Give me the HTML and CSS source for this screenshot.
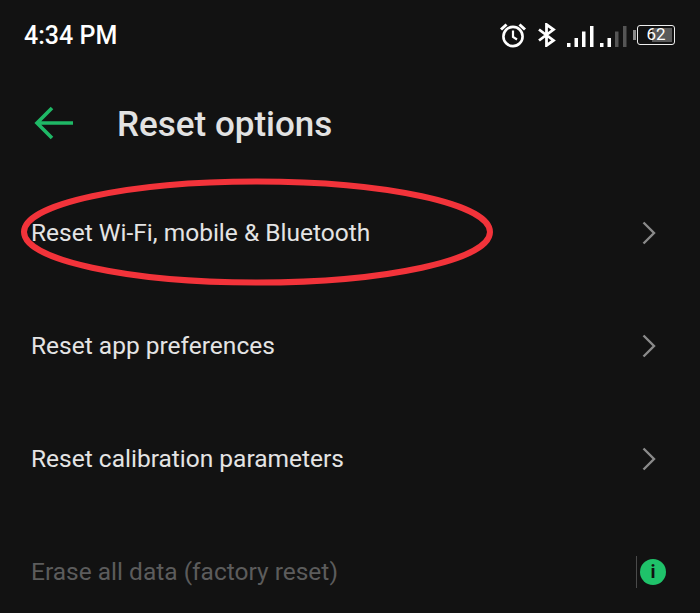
FILE: index.html
```html
<!DOCTYPE html>
<html>
<head>
  <meta charset="utf-8" />
  <meta name="viewport" content="width=device-width, initial-scale=1" />
  <title>Reset options</title>
  <link rel="stylesheet" href="styles.css">
</head>
<body>
  <div id="status-bar">
    <span id="clock">4:34 PM</span>
    <div id="status-icons">
      <svg class="alarm" width="28" height="26" viewBox="0 0 28 26" fill="none" stroke="#fff">
        <circle cx="14" cy="14.5" r="9.6" stroke-width="2.6" />
        <path d="M14 8.5V15l4 2.5" stroke-width="2.2" />
        <path d="M2 7.5 7.5 2.5M26 7.5 20.5 2.5" stroke-width="3" />
      </svg>
      <svg class="bluetooth" width="20" height="24" viewBox="0 0 20 24" fill="none" stroke="#fff" stroke-width="2.8">
        <path d="M2 6.5 16.5 17.5 9.5 22.5V1.5L16.5 6.5 2 17.5" />
      </svg>
      <svg class="signal" width="64" height="21" viewBox="0 0 64 21" fill="#fff">
        <rect x="0" y="17" width="3.5" height="4" />
        <rect x="7.5" y="12" width="3.5" height="9" />
        <rect x="15" y="5.5" width="3.5" height="15.5" />
        <rect x="23" y="0" width="3.5" height="21" />
        <rect x="33" y="17" width="3.5" height="4" />
        <rect x="40.5" y="12" width="3.5" height="9" />
        <rect x="48" y="5.5" width="3.5" height="15.5" fill="#555" />
        <rect x="56" y="0" width="3.5" height="21" fill="#555" />
      </svg>
      <div class="battery-nub"></div>
      <div class="battery">
        <div class="battery-level" style="width: 62%"></div>
        <span>62</span>
      </div>
    </div>
  </div>

  <div id="header">
    <svg class="back" width="42" height="34" viewBox="0 0 42 34" fill="none" stroke="#1fb866" stroke-width="3.6">
      <path d="M39 17H3M18 2 3 17l15 15" />
    </svg>
    <h1>Reset options</h1>
  </div>

  <div id="options">
    <div class="row">
      <span>Reset Wi-Fi, mobile &amp; Bluetooth</span>
      <svg class="chevron" width="16" height="24" viewBox="0 0 16 24" fill="none" stroke="#8a8a8a" stroke-width="2.4">
        <path d="M2.5 1.5 13 12 2.5 22.5" />
      </svg>
      <svg class="circled" width="476" height="110" viewBox="0 0 476 110" fill="none" stroke="#f2333a" stroke-width="6">
        <ellipse cx="238" cy="55" rx="233" ry="50.5" />
      </svg>
    </div>
    <div class="row">
      <span>Reset app preferences</span>
      <svg class="chevron" width="16" height="24" viewBox="0 0 16 24" fill="none" stroke="#8a8a8a" stroke-width="2.4">
        <path d="M2.5 1.5 13 12 2.5 22.5" />
      </svg>
    </div>
    <div class="row">
      <span>Reset calibration parameters</span>
      <svg class="chevron" width="16" height="24" viewBox="0 0 16 24" fill="none" stroke="#8a8a8a" stroke-width="2.4">
        <path d="M2.5 1.5 13 12 2.5 22.5" />
      </svg>
    </div>
    <div class="row disabled">
      <span>Erase all data (factory reset)</span>
      <div class="info-wrap">
        <div class="divider"></div>
        <div class="info">i</div>
      </div>
    </div>
  </div>
</body>
</html>
```

FILE: styles.css
```css
* {
  margin: 0;
  padding: 0;
  box-sizing: border-box;
}

html, body {
  height: 613px;
  overflow: hidden;
}

body {
  background-color: #121212;
  color: #e6e6e6;
  font-family: Roboto, sans-serif;
}

#status-bar {
  display: flex;
  align-items: center;
  justify-content: space-between;
  height: 36px;
  margin-top: 17px;
  padding: 0 25px 0 24px;
}

#clock {
  color: #fff;
  font-size: 25px;
  font-weight: 500;
}

#status-icons {
  display: flex;
  align-items: center;
}

.alarm {
  margin-right: 10px;
}

.bluetooth {
  margin-right: 10px;
}

.signal {
  margin-right: 2px;
  margin-top: 3px;
}

.battery-nub {
  width: 3px;
  height: 10px;
  background-color: #8a8a8a;
  margin-right: 1px;
}

.battery {
  position: relative;
  width: 38px;
  height: 20px;
  border: 1.5px solid #eee;
  border-radius: 3px;
  padding: 2px;
  font-size: 17px;
  color: #fff;
}

.battery-level {
  height: 100%;
  margin-left: auto;
  background-color: #5a5a5a;
}

.battery span {
  position: absolute;
  top: -2px;
  left: 0;
  width: 100%;
  text-align: center;
}

#header {
  display: flex;
  align-items: center;
  height: 70px;
  margin-top: 36px;
  padding-left: 34px;
}

.back {
  margin-bottom: 3px;
}

#header h1 {
  margin-left: 41px;
  font-size: 35px;
  font-weight: 500;
  color: #e2e2e2;
}

#options {
  margin-top: 17px;
}

.row {
  position: relative;
  display: flex;
  align-items: center;
  justify-content: space-between;
  height: 113px;
  padding: 0 43px 0 31px;
  font-size: 24.5px;
  font-weight: 400;
  color: #e4e4e4;
}

.circled {
  position: absolute;
  left: 19px;
  top: 1px;
}

.disabled {
  color: #5c5c5c;
  padding-right: 34px;
}

.info-wrap {
  display: flex;
  align-items: center;
  gap: 3px;
}

.divider {
  width: 1px;
  height: 32px;
  background-color: #4a4a4a;
}

.info {
  width: 26px;
  height: 26px;
  border-radius: 50%;
  background-color: #1fc26a;
  color: #111;
  font-size: 19px;
  font-weight: 700;
  line-height: 26px;
  text-align: center;
}
```
